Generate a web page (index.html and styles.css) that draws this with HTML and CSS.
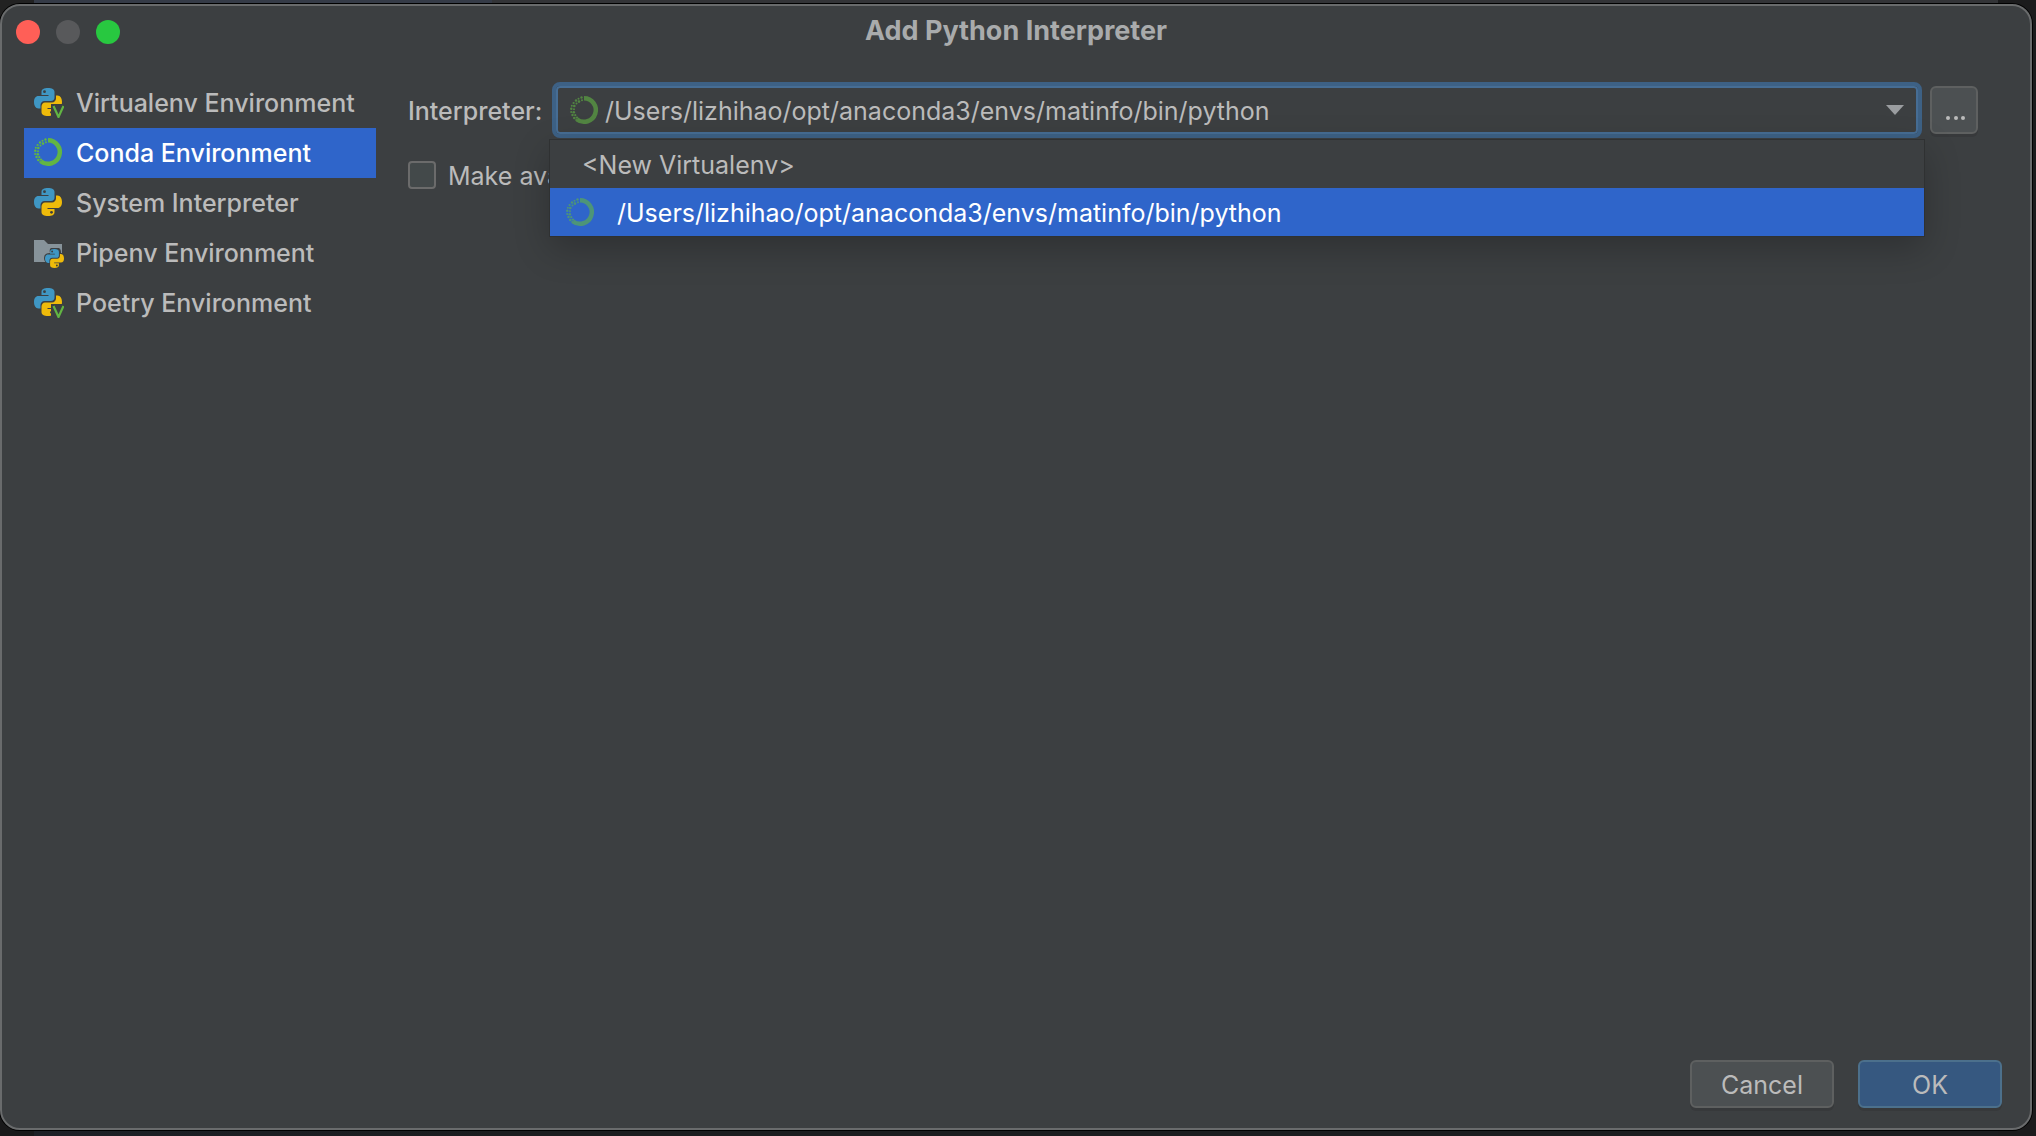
FILE: index.html
```html
<!DOCTYPE html>
<html lang="en">
<head>
<meta charset="utf-8">
<title>Add Python Interpreter</title>
<link rel="stylesheet" href="styles.css">
</head>
<body>
<svg class="sprite" aria-hidden="true">
  <symbol id="snake" viewBox="0 0 28 28">
    <path fill="#3f97c4" d="M14 0C10 0 7.500 1 7.500 4V7H14.500V8H4.500C1.500 8 0 10.500 0 14S1.500 20.500 4.500 20.500H6.500V17C6.500 14.800 8.300 13 10.500 13H17C19 13 20.500 11.500 20.500 9.500V4C20.500 1.300 18 0 14 0Z"/>
    <circle cx="10.500" cy="3.700" r="1.400" fill="#3c3f41"/>
    <path fill="#efbb0a" d="M14 28C18 28 20.500 27 20.500 24V21H13.500V20H23.500C26.500 20 28 17.500 28 14S26.500 7.500 23.500 7.500H22V10.500C22 12.700 20.200 14.500 18 14.500H11C9 14.500 7.500 16.500 7.500 18.500V24C7.500 26.700 10 28 14 28Z"/>
    <circle cx="17.500" cy="24.300" r="1.400" fill="#3c3f41"/>
  </symbol>
  <symbol id="python" viewBox="0 0 32 32">
    <use href="#snake" x="2" y="2" width="28" height="28"/>
  </symbol>
  <symbol id="python-env" viewBox="0 0 32 32">
    <use href="#snake" x="2" y="2" width="28" height="28"/>
    <path fill="#3c3f41" d="M19 18H32V32H19Z"/>
    <path fill="none" stroke="#62b543" stroke-width="2.200" d="M21.500 20L26.500 31L31.500 20"/>
  </symbol>
  <symbol id="folder-python" viewBox="0 0 32 32">
    <path fill="#87939a" d="M2 4H12L16 8H30V26H2Z"/>
    <path fill="#3c3f41" d="M19 12H27Q29 13 29 17H32V32H17V28Q12 27 12 22T18 17Q17 13 19 12Z"/>
    <use href="#snake" x="13" y="13" width="19" height="19"/>
  </symbol>
  <symbol id="conda" viewBox="0 0 32 32">
    <path fill="none" stroke="currentColor" stroke-width="4.500" d="M16 4.200A11.800 11.800 0 1 1 9 25.500"/>
    <g fill="currentColor">
      <circle cx="13.500" cy="3.500" r="1.200"/><circle cx="14" cy="6.300" r="1"/><circle cx="10.500" cy="4.800" r="1"/>
      <circle cx="11" cy="7.600" r="1.300"/><circle cx="8" cy="6.500" r="1.200"/><circle cx="8.500" cy="9.500" r="1"/>
      <circle cx="5.600" cy="9" r="1.100"/><circle cx="6.300" cy="12" r="1.300"/><circle cx="3.800" cy="11.800" r="1"/>
      <circle cx="3.300" cy="14.800" r="1.200"/><circle cx="6" cy="15.200" r="1"/><circle cx="3.200" cy="18" r="1"/>
      <circle cx="5.800" cy="18.300" r="1.300"/><circle cx="4.500" cy="21" r="1.200"/><circle cx="7.300" cy="21.200" r="1.100"/>
      <circle cx="6.300" cy="24" r="1.300"/><circle cx="9" cy="23.600" r="1.200"/><circle cx="8.200" cy="26" r="1"/>
    </g>
  </symbol>
</svg>
<div class="backdrop">
  <main class="dialog">
    <header class="titlebar">
      <div class="lights">
        <button class="light close" aria-label="Close"></button>
        <button class="light minimize" aria-label="Minimize" disabled></button>
        <button class="light zoom" aria-label="Zoom"></button>
      </div>
      <h1 class="title">Add Python Interpreter</h1>
    </header>
    <div class="content">
      <nav class="sidebar">
        <a class="kind" href="#virtualenv"><svg class="icon"><use href="#python-env"/></svg>Virtualenv Environment</a>
        <a class="kind selected" href="#conda-env" aria-current="page"><svg class="icon conda"><use href="#conda"/></svg>Conda Environment</a>
        <a class="kind" href="#system"><svg class="icon"><use href="#python"/></svg>System Interpreter</a>
        <a class="kind" href="#pipenv"><svg class="icon"><use href="#folder-python"/></svg>Pipenv Environment</a>
        <a class="kind" href="#poetry"><svg class="icon"><use href="#python-env"/></svg>Poetry Environment</a>
      </nav>
      <form class="panel">
        <div class="row">
          <label class="label" for="interpreter">Interpreter:</label>
          <div class="combo">
            <select class="select" id="interpreter">
              <option>&lt;New Virtualenv&gt;</option>
              <option selected>/Users/lizhihao/opt/anaconda3/envs/matinfo/bin/python</option>
            </select>
            <svg class="icon conda combo-icon"><use href="#conda"/></svg>
            <svg class="arrow" viewBox="0 0 18 10"><path fill="#9a9da0" d="M0 0H18L9 10Z"/></svg>
            <ul class="popup" role="listbox" aria-label="Interpreter">
              <li class="option" role="option"><span class="option-text">&lt;New Virtualenv&gt;</span></li>
              <li class="option active" role="option" aria-selected="true"><svg class="icon conda"><use href="#conda"/></svg><span class="option-text">/Users/lizhihao/opt/anaconda3/envs/matinfo/bin/python</span></li>
            </ul>
          </div>
          <button class="button browse" type="button" aria-label="Browse"><svg class="dots" viewBox="0 0 20 4"><circle cx="2" cy="2" r="2"/><circle cx="10" cy="2" r="2"/><circle cx="17" cy="2" r="2"/></svg></button>
        </div>
        <div class="share">
          <input class="checkbox" id="share" type="checkbox">
          <label class="share-label" for="share">Make available to all projects</label>
        </div>
      </form>
    </div>
    <footer class="actions">
      <button class="button">Cancel</button>
      <button class="button primary">OK</button>
    </footer>
  </main>
</div>
</body>
</html>
```
FILE: styles.css
```css
* { box-sizing: border-box; }

body {
  margin: 0;
  font-family: Inter, "Liberation Sans", sans-serif;
  font-size: 25px;
  line-height: 32px;
  color: #bbbbbb;
}

button, select, input { font: inherit; color: inherit; margin: 0; }

.sprite { position: absolute; width: 0; height: 0; }

.backdrop {
  display: flex;
  min-height: 100vh;
  padding: 4px 4px 6px 0;
  background:
    linear-gradient(#1b1b1c, #1b1b1c) top right / 38px 100% no-repeat,
    linear-gradient(90deg, #222222 34px, #353b47 34px, #353b47 492px, #333437 492px) top / 100% 20px no-repeat,
    linear-gradient(90deg, #19191a 34px, #1d2026 34px, #1b1c1e 500px);
}

.dialog {
  flex: 1;
  display: flex;
  flex-direction: column;
  background: #3c3f41;
  border: 2px solid #696b6c;
  border-radius: 20px;
  box-shadow: 0 0 0 1px #000000;
}

.titlebar {
  display: grid;
  grid-template-columns: 1fr auto 1fr;
  align-items: center;
  height: 52px;
  padding: 0 14px;
}

.lights { display: flex; gap: 16px; }
.light { width: 24px; height: 24px; padding: 0; border: 0; border-radius: 50%; }
.close { background: #ff5f57; }
.minimize { background: #58595b; }
.zoom { background: #28c840; }
.title { margin: 0; padding-bottom: 2px; font-size: 27px; font-weight: 700; color: #a9abac; }

.content { flex: 1; display: flex; gap: 32px; padding: 20px 52px 0 22px; }

.sidebar { width: 352px; }

.kind {
  display: flex;
  align-items: center;
  gap: 12px;
  height: 50px;
  padding: 0 8px;
  font-weight: 500;
  color: inherit;
  text-decoration: none;
  white-space: nowrap;
}
.kind.selected { background: #2f65ca; color: #ffffff; }

.icon { flex: none; width: 32px; height: 32px; }
.kind .icon { margin-bottom: 2px; }
.conda { color: #62b543; }

.panel { flex: 1; padding-top: 4px; }
.row { display: flex; align-items: center; gap: 8px; }
.label { width: 136px; padding-top: 2px; font-weight: 500; }

.combo { position: relative; flex: 1; display: grid; align-items: center; }
.combo > .select, .combo > .icon, .combo > .arrow { grid-area: 1 / 1; }

.select {
  appearance: none;
  width: 100%;
  height: 56px;
  padding: 2px 56px 0 49px;
  border: 4px solid #3d6185;
  border-radius: 8px;
  box-shadow: inset 0 0 0 2px #466d94;
  background: #3c3f41;
  outline: none;
}
.combo-icon { margin-left: 16px; opacity: 0.6; pointer-events: none; }
.arrow { justify-self: end; width: 18px; height: 10px; margin-right: 18px; pointer-events: none; }

.popup {
  position: absolute;
  top: 100%;
  left: -2px;
  right: -2px;
  margin: 2px 0 0;
  padding: 0;
  list-style: none;
  background: #3c3f41;
  box-shadow: 0 0 0 1px #2f3132, 0 12px 36px rgba(0, 0, 0, 0.24);
}
.option { display: flex; align-items: center; gap: 21px; height: 48px; padding: 0 32px; }
.option.active { padding: 0 14px; background: #2f65ca; color: #ffffff; }
.option .icon { opacity: 0.6; }
.option-text { padding-top: 2px; }

.button {
  width: 144px;
  height: 48px;
  padding: 2px 0 0;
  border: 2px solid #5e6060;
  border-radius: 6px;
  background: #4c5052;
  box-shadow: 0 3px 0 #37393b;
}
.primary { background: #365880; border-color: #4c708c; }
.browse { width: 48px; display: flex; justify-content: center; padding: 28px 0 0 3px; }
.dots { width: 20px; height: 4px; fill: #bbbbbb; }

.share { display: flex; align-items: center; gap: 12px; margin-top: 20px; }
.share-label { padding-top: 2px; }
.checkbox {
  appearance: none;
  width: 28px;
  height: 28px;
  border: 2px solid #6b6b6b;
  border-radius: 4px;
  background: #43494a;
}

.actions { display: flex; justify-content: flex-end; gap: 24px; padding: 0 28px 20px; }
```
